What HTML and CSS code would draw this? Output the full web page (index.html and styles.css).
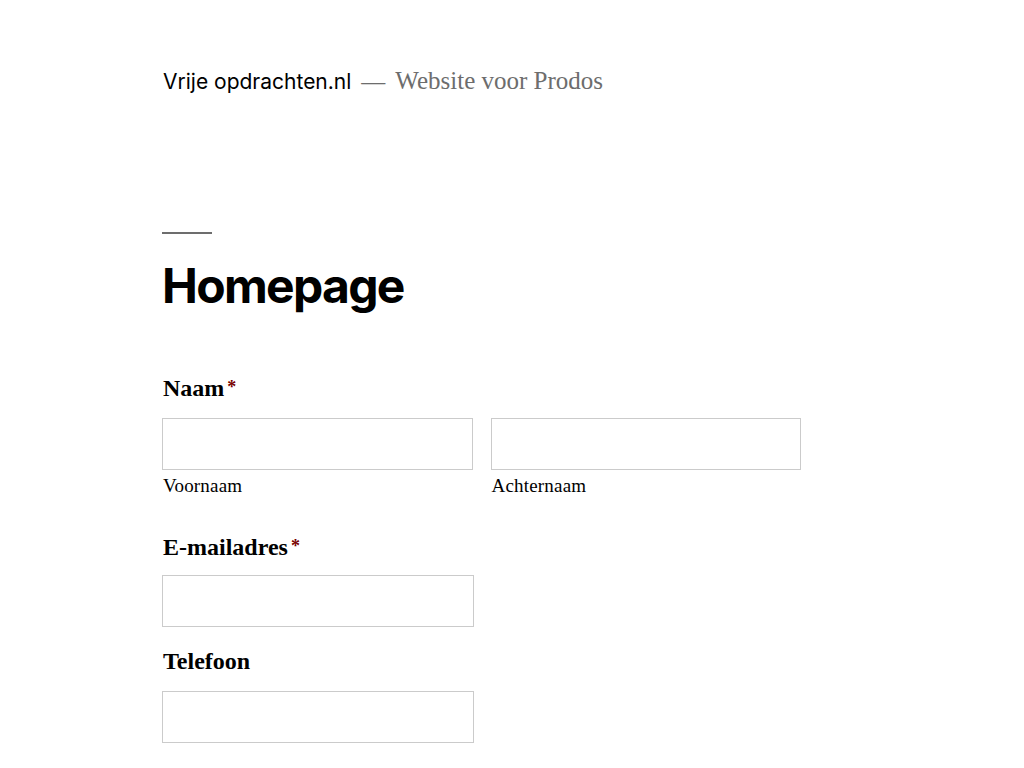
FILE: index.html
```html
<!DOCTYPE html>
<html lang="nl">
<head>
<meta charset="utf-8">
<title>Homepage – Vrije opdrachten.nl</title>
<link rel="stylesheet" href="styles.css">
</head>
<body>
<header class="site-header">
  <div class="site-title">Vrije opdrachten.nl</div>
  <span class="site-dash">—</span>
  <div class="site-description">Website voor Prodos</div>
</header>
<main class="content">
  <hr class="rule">
  <h1 class="entry-title">Homepage</h1>
  <form class="form">
    <fieldset class="field">
      <legend class="label label-first">Naam<span class="req">*</span></legend>
      <div class="name-grid">
        <div class="name-part">
          <input class="input" type="text" aria-label="Voornaam">
          <span class="sub-label">Voornaam</span>
        </div>
        <div class="name-part">
          <input class="input" type="text" aria-label="Achternaam">
          <span class="sub-label">Achternaam</span>
        </div>
      </div>
    </fieldset>
    <div class="field field-email">
      <label class="label">E-mailadres<span class="req">*</span></label>
      <input class="input input-half" type="email">
    </div>
    <div class="field field-phone">
      <label class="label">Telefoon</label>
      <input class="input input-half" type="tel">
    </div>
  </form>
</main>
</body>
</html>
```

FILE: styles.css
```css
html, body {
  margin: 0;
  padding: 0;
  background: #fff;
}

body {
  color: #000;
  font-family: "Liberation Serif", "DejaVu Serif", serif;
}

.site-header {
  display: flex;
  align-items: baseline;
  padding: 66px 0 0 162px;
  line-height: 30px;
}

.site-title {
  font-family: Inter, "Liberation Sans", sans-serif;
  font-size: 21px;
  letter-spacing: 0;
  color: #000;
  padding-left: 1px;
}

.site-dash {
  color: #6d6d6d;
  font-family: "Liberation Serif", serif;
  font-size: 24px;
  margin: 0 10px 0 10px;
}

.site-description {
  color: #6d6d6d;
  font-size: 25px;
  letter-spacing: 0;
}

.content {
  margin-left: 162px;
  width: 639px;
}

.rule {
  width: 50px;
  height: 2px;
  margin: 135px 0 0 0;
  border: none;
  background: #6d6d6d;
}

.entry-title {
  margin: 26px 0 0 0;
  font-family: Inter, "Liberation Sans", sans-serif;
  font-weight: 700;
  font-size: 48px;
  line-height: 52.8px;
  letter-spacing: -0.035em;
  color: #000;
}

.form {
  margin: 0;
}

.field {
  border: none;
  padding: 0;
  margin: 0;
  min-width: 0;
}

.label {
  display: block;
  font-weight: 700;
  font-size: 24px;
  line-height: 30px;
  letter-spacing: 0;
  padding: 0 1px;
  margin-bottom: 15px;
}

.label-first {
  margin-top: 59px;
  float: left;
  width: 100%;
}

.name-grid {
  clear: both;
  display: grid;
  grid-template-columns: 1fr 1fr;
  column-gap: 18px;
}

.name-part {
  display: flex;
  flex-direction: column;
}

.req {
  color: #790000;
  font-size: 18px;
  vertical-align: 3px;
  margin-left: 3px;
}

.input {
  box-sizing: border-box;
  display: block;
  width: 100%;
  height: 52px;
  margin: 0;
  border: 1px solid #cbcbcb;
  border-radius: 0;
  background: #fff;
  padding: 0 10px;
  font-size: 18px;
}

.input-half {
  width: 312px;
}

.sub-label {
  display: block;
  margin-top: 4px;
  padding-left: 1px;
  font-size: 19px;
  line-height: 24px;
  letter-spacing: 0.01em;
  color: #000;
}

.field-email {
  margin-top: 33px;
}

.field-email .label {
  margin-bottom: 13px;
}

.field-phone {
  margin-top: 19px;
}

.field-phone .label {
  margin-bottom: 15px;
}
```
